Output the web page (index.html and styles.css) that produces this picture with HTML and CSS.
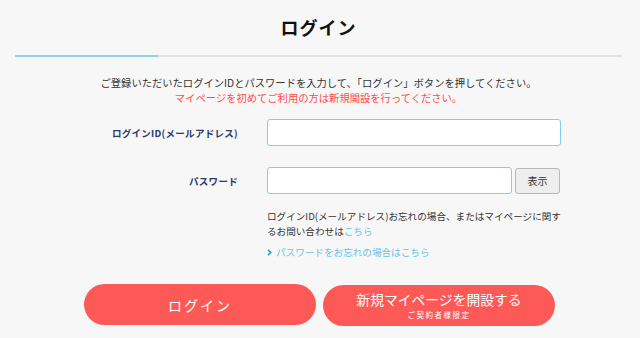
FILE: index.html
```html
<!DOCTYPE html>
<html lang="ja">
<head>
<meta charset="utf-8">
<title>ログイン</title>
<link rel="stylesheet" href="styles.css">
</head>
<body>
<div class="page">
  <h1 class="title">ログイン</h1>
  <div class="tabline"><span class="tab-active"></span><span class="tab-rest"></span></div>
  <div class="intro">
    <p class="intro-main">ご登録いただいたログインIDとパスワードを入力して、「ログイン」ボタンを押してください。</p>
    <p class="intro-note">マイページを初めてご利用の方は新規開設を行ってください。</p>
  </div>
  <form class="form">
    <div class="row">
      <label class="label" for="uid">ログインID(メールアドレス)</label>
      <input class="input input-wide" id="uid" type="text">
    </div>
    <div class="row row-pass">
      <label class="label" for="pw">パスワード</label>
      <div class="pass-group">
        <input class="input input-pass" id="pw" type="password">
        <button class="show-btn" type="button">表示</button>
      </div>
    </div>
    <div class="help">
      <p class="help-line">ログインID(メールアドレス)お忘れの場合、またはマイページに関す</p>
      <p class="help-line">るお問い合わせは<a class="link" href="#">こちら</a></p>
      <p class="help-link"><svg class="chev" width="5" height="7" viewBox="0 0 5 7"><path d="M1 0.8 L3.8 3.5 L1 6.2" fill="none" stroke="#2aa5d6" stroke-width="1.7"/></svg><a class="link" href="#">パスワードをお忘れの場合はこちら</a></p>
    </div>
    <div class="actions">
      <button class="btn btn-login" type="button">ログイン</button>
      <button class="btn btn-signup" type="button"><span class="btn-main">新規マイページを開設する</span><span class="btn-sub">ご契約者様限定</span></button>
    </div>
  </form>
</div>
</body>
</html>
```
FILE: styles.css
```css
html, body {
  margin: 0;
  padding: 0;
  background: #f7f7f7;
}
body {
  font-family: "Noto Sans CJK JP", "Noto Sans", sans-serif;
  color: #333;
}
.page {
  margin: 0 18px 0 15px;
}
.title {
  margin: 0;
  padding-top: 14px;
  font-size: 18px;
  line-height: 26px;
  font-weight: 700;
  text-align: center;
  color: #111;
  letter-spacing: 1px;
}
.tabline {
  display: flex;
  margin-top: 15px;
  height: 2px;
}
.tab-active {
  width: 143px;
  background: #8ed3ee;
}
.tab-rest {
  flex: 1;
  background: #e2e0e0;
}
.intro {
  margin-top: 18px;
  text-align: center;
  font-size: 10.3px;
  line-height: 15px;
}
.intro p {
  margin: 0;
}
.intro-main {
  color: #333;
}
.intro-note {
  color: #ff4b4b;
}
.form {
  margin: 14px 0 0 0;
}
.row {
  display: flex;
  align-items: center;
}
.row-pass {
  margin-top: 21px;
}
.label {
  width: 223px;
  margin-right: 29px;
  text-align: right;
  font-size: 9.5px;
  font-weight: 700;
  color: #2d3a6b;
  letter-spacing: 0.3px;
}
.input {
  box-sizing: border-box;
  height: 27px;
  border: 1.5px solid #86cdec;
  border-radius: 3px;
  background: #fff;
  margin: 0;
  padding: 0 6px;
}
.input-wide {
  width: 294px;
}
.pass-group {
  display: flex;
  align-items: center;
  gap: 3px;
}
.input-pass {
  width: 245px;
}
.show-btn {
  box-sizing: border-box;
  width: 45px;
  height: 26px;
  border: 1px solid #b8b8b8;
  border-radius: 3px;
  background: #eeeeee;
  color: #333;
  font-family: inherit;
  font-size: 10px;
  padding: 0;
}
.help {
  margin: 15px 0 0 252px;
  width: 300px;
  font-size: 9.6px;
  line-height: 15px;
  color: #333;
}
.help p {
  margin: 0;
  white-space: nowrap;
}
.help .help-link {
  margin-top: 6px;
  display: flex;
  align-items: center;
}
.link {
  color: #66c3e8;
  text-decoration: none;
}
.chev {
  display: block;
  margin: 0 4px 0 0;
}
.actions {
  display: flex;
  justify-content: center;
  gap: 7px;
  margin-top: 24px;
  padding-left: 2px;
}
.btn {
  box-sizing: border-box;
  width: 232px;
  height: 41px;
  border: none;
  border-radius: 21px;
  background: #fd5957;
  color: #fff;
  font-family: inherit;
  padding: 0;
  display: flex;
  flex-direction: column;
  align-items: center;
  justify-content: center;
}
.btn-login {
  font-size: 14px;
  letter-spacing: 2px;
}
.btn-signup {
  margin-top: 1px;
}
.btn-main {
  font-size: 13.8px;
  line-height: 16px;
}
.btn-sub {
  font-size: 7.5px;
  line-height: 10px;
  letter-spacing: 1.5px;
  margin-top: 2.6px;
  margin-bottom: 0;
}
```
